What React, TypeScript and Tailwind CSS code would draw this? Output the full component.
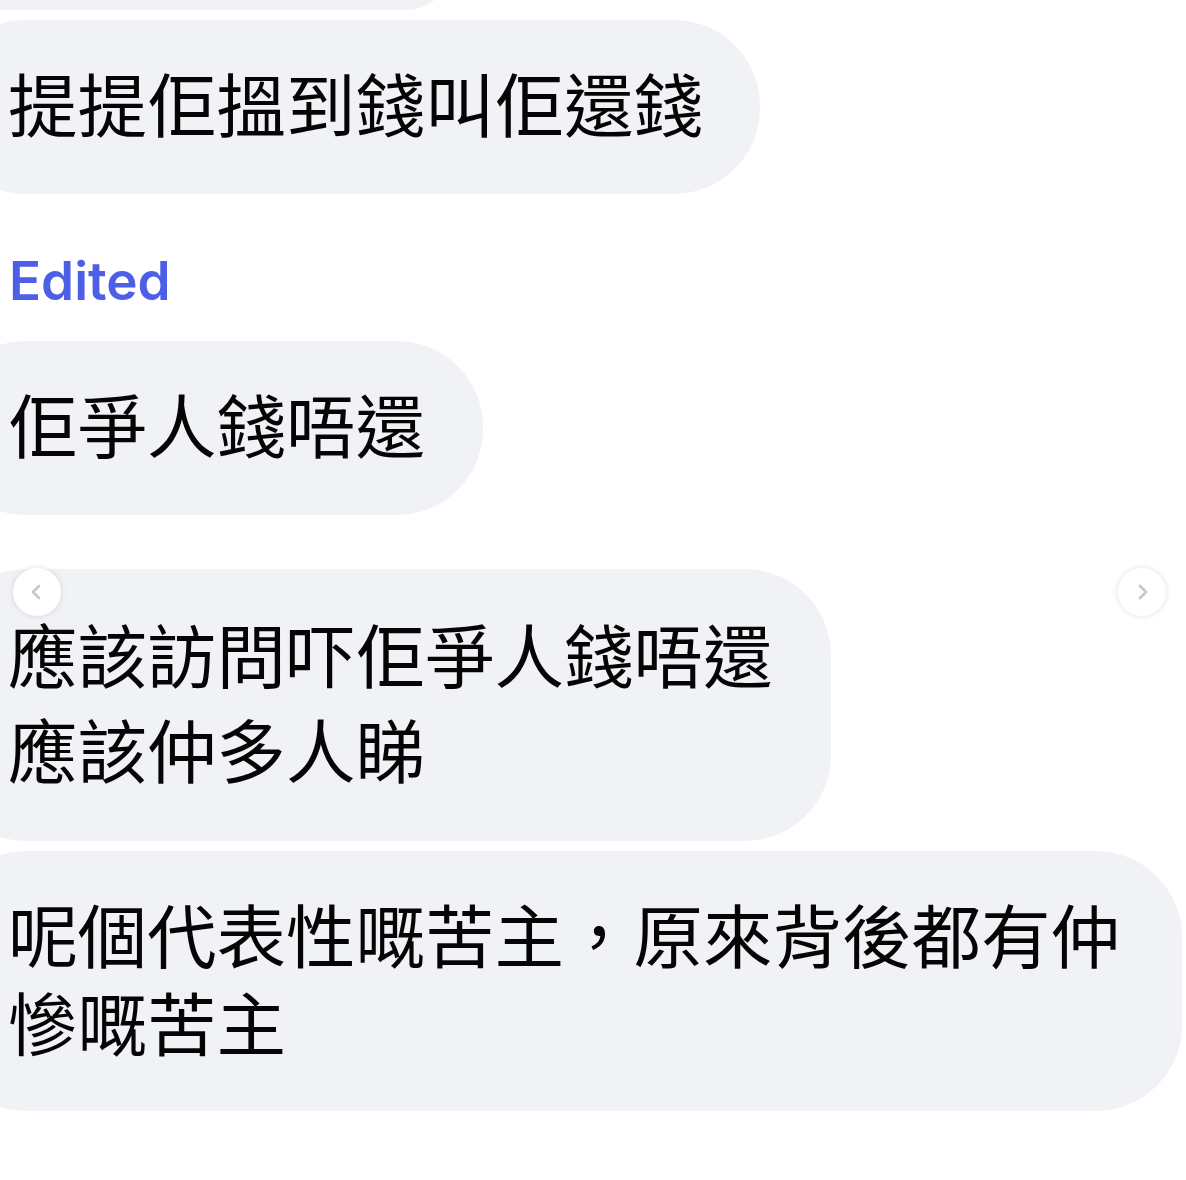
import React from "react";
import { ChevronLeft, ChevronRight } from "lucide-react";

const cjk = "font-['Noto_Sans_CJK_TC','Noto_Sans_CJK_SC',sans-serif]";

const Bubble = ({
  children,
  className = "",
}: {
  children: React.ReactNode;
  className?: string;
}) => (
  <div
    className={`bg-[#f0f2f5] rounded-[86px] pl-[68px] text-[69.5px] text-[#050505] ${cjk} ${className}`}
  >
    {children}
  </div>
);

const App = () => {
  return (
    <div className="w-[1186px] h-[1180px] overflow-hidden bg-white">
      <div className="flex flex-col items-start -ml-[60px]">
        <div className="w-[510px] h-[86px] -mt-[76px] bg-[#f0f2f5] rounded-[86px]" />

        <Bubble className="mt-[10px] pt-[35px] pb-[45px] pr-[57px] leading-[94px]">
          提提佢搵到錢叫佢還錢
        </Bubble>

        <div className="ml-[69px] mt-[61px] mb-[33px] text-[53px] leading-none font-semibold text-[#4c5fe6] font-['Inter',sans-serif]">
          Edited
        </div>

        <Bubble className="pt-[35px] pb-[45px] pr-[58px] leading-[94px]">佢爭人錢唔還</Bubble>

        <div className="relative w-[1246px] mt-[54px]">
          <Bubble className="inline-block pt-[36px] pb-[46px] pr-[58px] leading-[95px]">
            應該訪問吓佢爭人錢唔還
            <br />
            應該仲多人睇
          </Bubble>
          <div className="absolute top-[-1px] left-[73px] w-[48px] h-[48px] rounded-full bg-white shadow-[0_0_6px_rgba(0,0,0,0.12)] flex items-center justify-center">
            <ChevronLeft size={24} strokeWidth={2.75} className="text-[#c9c9c9] -ml-[2px]" />
          </div>
          <div className="absolute top-[-1px] left-[1178px] w-[48px] h-[48px] rounded-full bg-white shadow-[0_0_6px_rgba(0,0,0,0.12)] flex items-center justify-center">
            <ChevronRight size={24} strokeWidth={2.75} className="text-[#c9c9c9] ml-[2px]" />
          </div>
        </div>

        <Bubble className="mt-[10px] pt-[38px] pb-[46px] pr-[62px] leading-[88px]">
          呢個代表性嘅苦主，原來背後都有仲
          <br />
          慘嘅苦主
        </Bubble>
      </div>
    </div>
  );
};

export default App;
